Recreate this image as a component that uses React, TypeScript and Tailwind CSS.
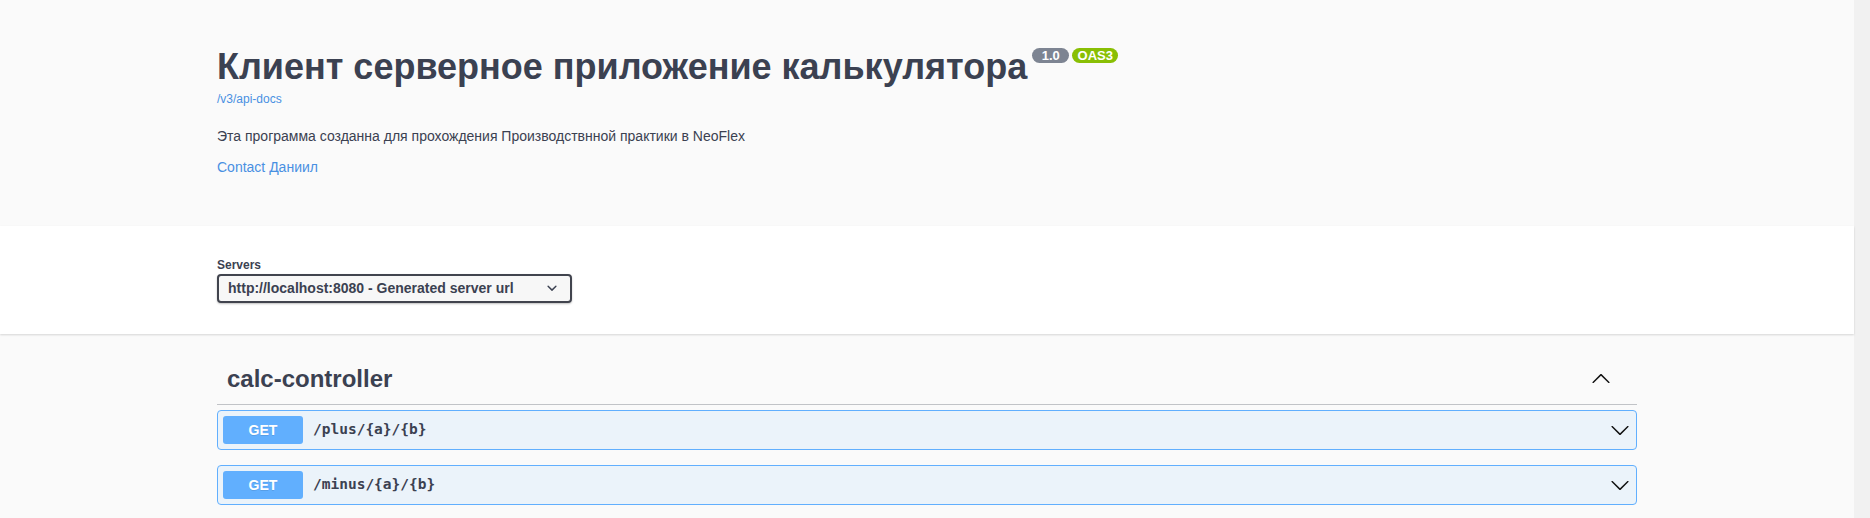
import React from "react";

const sans = "font-['Liberation_Sans',Arial,sans-serif]";
const mono = "font-['DejaVu_Sans_Mono','Liberation_Mono',monospace]";

const operations = [
  { id: 1, method: "GET", path: "/plus/{a}/{b}" },
  { id: 2, method: "GET", path: "/minus/{a}/{b}" },
];

const Chevron = ({ up = false }: { up?: boolean }) => (
  <svg
    width="20"
    height="20"
    viewBox="0 0 20 20"
    className={up ? "rotate-180 shrink-0" : "shrink-0"}
  >
    <path
      fill="#111"
      d="M17.418 6.109c.272-.268.709-.268.979 0s.271.701 0 .969l-7.908 7.83c-.27.268-.707.268-.979 0l-7.908-7.83c-.27-.268-.27-.701 0-.969.271-.268.709-.268.979 0L10 13.25l7.418-7.141z"
    />
  </svg>
);

const SelectArrow = () => (
  <svg width="20" height="20" viewBox="0 0 20 20" className="shrink-0">
    <path
      fill="#3b4151"
      d="M13.418 7.859a.695.695 0 01.978 0 .68.68 0 010 .969l-3.908 3.83a.697.697 0 01-.979 0l-3.908-3.83a.68.68 0 010-.969.695.695 0 01.978 0L10 11z"
    />
  </svg>
);

const Info = () => (
  <div className="bg-[#fafafa] h-[226px]">
    <div className="max-w-[1460px] mx-auto px-5 pt-[46px]">
      <div className="flex items-start">
        <h2 className="text-[36px] leading-[42px] font-bold text-[#3b4151]">
          Клиент серверное приложение калькулятора
        </h2>
        <div className="flex gap-[3px] ml-[5px] mt-[2px]">
          <span className="w-[37px] h-[15px] rounded-full bg-[#7d8492] text-white text-[13px] font-bold leading-[15px] text-center">
            1.0
          </span>
          <span className="w-[46px] h-[15px] rounded-full bg-[#89bf04] text-white text-[13px] font-bold leading-[15px] text-center">
            OAS3
          </span>
        </div>
      </div>
      <a className="block mt-[3px] text-[12px] leading-[16px] text-[#4990e2]">
        /v3/api-docs
      </a>
      <p className="mt-[19px] text-[14px] leading-[20px] text-[#3b4151]">
        Эта программа созданна для прохождения Производствнной практики в NeoFlex
      </p>
      <a className="block mt-[11px] text-[14px] leading-[20px] text-[#4990e2]">
        Contact Даниил
      </a>
    </div>
  </div>
);

const Servers = () => (
  <div className="bg-white h-[108px] shadow-[0_1px_2px_0_rgba(0,0,0,0.15)] relative">
    <div className="max-w-[1460px] mx-auto px-5 pt-[31px]">
      <label className="block text-[12px] leading-[16px] font-bold text-[#3b4151]">
        Servers
      </label>
      <div className="mt-[1px] w-[355px] h-[29px] flex items-center justify-between border-2 border-[#41444e] rounded-[4px] bg-[#f7f7f7] shadow-[0_1px_2px_0_rgba(0,0,0,0.25)] pl-[9px] pr-[8px] pb-[1px]">
        <span className="text-[14px] font-bold text-[#3b4151]">
          http://localhost:8080 - Generated server url
        </span>
        <SelectArrow />
      </div>
    </div>
  </div>
);

const Operation = ({ method, path }: { method: string; path: string }) => (
  <div className="mb-[15px] border border-[#61affe] rounded-[4px] bg-[#ebf3fa] p-[5px] flex items-center">
    <span className="w-[80px] h-[28px] rounded-[3px] bg-[#61affe] text-white text-[14px] font-bold flex items-center justify-center [text-shadow:0_1px_0_rgba(0,0,0,0.1)]">
      {method}
    </span>
    <span className={`${mono} flex-1 px-[10px] text-[14.5px] font-bold text-[#3b4151]`}>
      {path}
    </span>
    <div className="mr-[1px]">
      <Chevron />
    </div>
  </div>
);

export default function App() {
  return (
    <div className={`${sans} flex w-[1870px] h-[518px] overflow-hidden bg-[#fafafa]`}>
      <div className="flex-1 min-w-0">
        <Info />
        <Servers />
        <div className="max-w-[1460px] mx-auto px-5 pt-[20px]">
          <h3 className="flex items-center justify-between h-[51px] pl-[10px] pr-[26px] border-b border-[#c1c3c7] mb-[5px]">
            <span className="text-[24px] font-bold text-[#3b4151]">calc-controller</span>
            <Chevron up />
          </h3>
          {operations.map((op) => (
            <Operation key={op.id} method={op.method} path={op.path} />
          ))}
        </div>
      </div>
      <div className="w-[16px] bg-[#f1f1f1]" />
    </div>
  );
}
